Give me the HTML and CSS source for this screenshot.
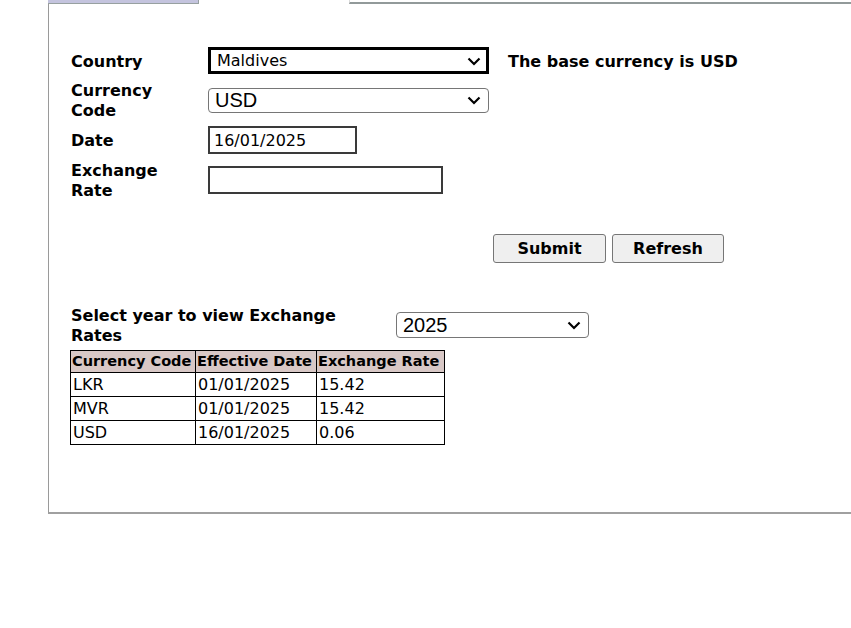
FILE: index.html
```html
<!DOCTYPE html>
<html>
<head>
<meta charset="utf-8">
<title>Exchange Rates</title>
<link rel="stylesheet" href="styles.css">
</head>
<body>
<div class="tabs">
  <div class="tab tab-left"></div>
  <div class="tab tab-active"></div>
  <div class="tab tab-right"></div>
</div>
<div class="panel">
  <div class="form">
    <label class="lbl">Country</label>
    <select class="sel sel-country"><option>Maldives</option></select>
    <span class="note">The base currency is USD</span>

    <label class="lbl">Currency Code</label>
    <select class="sel sel-currency"><option>USD</option></select>
    <span></span>

    <label class="lbl">Date</label>
    <input class="inp inp-date" type="text" value="16/01/2025">
    <span></span>

    <label class="lbl">Exchange Rate</label>
    <input class="inp inp-rate" type="text" value="">
    <span></span>
  </div>

  <div class="actions">
    <button class="btn">Submit</button>
    <button class="btn">Refresh</button>
  </div>

  <div class="year-row">
    <label class="lbl year-lbl">Select year to view Exchange Rates</label>
    <select class="sel sel-year"><option>2025</option></select>
  </div>

  <table class="rates">
    <colgroup>
      <col class="c1"><col class="c2"><col class="c3">
    </colgroup>
    <thead>
      <tr><th>Currency Code</th><th>Effective Date</th><th>Exchange Rate</th></tr>
    </thead>
    <tbody>
      <tr><td>LKR</td><td>01/01/2025</td><td>15.42</td></tr>
      <tr><td>MVR</td><td>01/01/2025</td><td>15.42</td></tr>
      <tr><td>USD</td><td>16/01/2025</td><td>0.06</td></tr>
    </tbody>
  </table>
</div>
</body>
</html>
```
FILE: styles.css
```css
html, body {
  margin: 0;
  padding: 0;
  background: #fff;
  overflow: hidden;
}
body {
  font-family: "DejaVu Sans", Verdana, sans-serif;
  font-size: 16px;
  color: #000;
}
.tabs {
  display: flex;
  height: 4px;
  margin-left: 48px;
}
.tab-left {
  width: 151px;
  background: #c4c4de;
  border-bottom: 1px solid #97a0a0;
  border-right: 1px solid #97a0a0;
  box-sizing: border-box;
}
.tab-active {
  width: 150px;
}
.tab-right {
  flex: 1;
  border-left: 1px solid #dcdcdc;
  border-bottom: 2px solid #929a9a;
  box-sizing: border-box;
}
.panel {
  margin-left: 48px;
  width: calc(100% - 46px);
  height: 510px;
  box-sizing: border-box;
  border-left: 1px solid #9a9a9a;
  border-bottom: 2px solid #a0a0a0;
  border-right: 1px solid #9a9a9a;
  padding: 43px 0 0 22px;
}
.form {
  display: grid;
  grid-template-columns: 137px auto 1fr;
  row-gap: 6px;
  align-items: center;
  justify-items: start;
}
.lbl {
  font-weight: bold;
  font-size: 16px;
  line-height: 20px;
  max-width: 120px;
  position: relative;
  top: 1px;
}
.note {
  font-weight: bold;
  line-height: 20px;
  padding-left: 19px;
  position: relative;
  top: 1px;
}
.sel {
  appearance: none;
  -webkit-appearance: none;
  box-sizing: border-box;
  margin: 0;
  font-family: "Liberation Sans", Arial, sans-serif;
  font-size: 20px;
  color: #000;
  background-color: #fff;
  background-image: url("data:image/svg+xml;utf8,<svg xmlns='http://www.w3.org/2000/svg' width='14' height='10' viewBox='0 0 14 10'><path d='M1.5 2.5 L7 8 L12.5 2.5' fill='none' stroke='black' stroke-width='2.2'/></svg>");
  background-repeat: no-repeat;
  background-position: right 7px center;
  background-size: 14px 10px;
  border: 1px solid #767676;
  border-radius: 4px;
  padding: 0 4px 0 6px;
}
.sel-country {
  width: 281px;
  height: 27px;
  border: 3px solid #000;
  border-radius: 0;
  font-family: "DejaVu Sans", Verdana, sans-serif;
  font-size: 16px;
  padding-left: 6px;
  background-position: right 5px center;
}
.sel-currency {
  width: 281px;
  height: 25px;
}
.inp {
  box-sizing: border-box;
  margin: 0;
  height: 28px;
  border: 2px solid #3a3a3a;
  font-family: "DejaVu Sans", Verdana, sans-serif;
  font-size: 16px;
  padding: 0 4px;
  color: #000;
  background: #fff;
}
.inp-date { width: 149px; }
.inp-rate { width: 235px; }
.actions {
  display: flex;
  gap: 6px;
  margin-top: 34px;
  margin-left: 422px;
}
.btn {
  box-sizing: border-box;
  width: 113px;
  height: 29px;
  margin: 0;
  padding: 0;
  font-family: "DejaVu Sans", Verdana, sans-serif;
  font-weight: bold;
  font-size: 16px;
  color: #000;
  background: #efefef;
  border: 1px solid #767676;
  border-radius: 3px;
}
.btn + .btn { width: 112px; }
.year-row {
  display: flex;
  align-items: center;
  margin-top: 42px;
}
.year-lbl {
  width: 285px;
  max-width: 285px;
  margin-right: 40px;
  flex: none;
}
.sel-year {
  width: 193px;
  height: 26px;
}
.rates {
  border-collapse: collapse;
  table-layout: fixed;
  width: 374px;
  margin-top: 5px;
  margin-left: -1px;
}
.c1 { width: 125px; }
.c2 { width: 121px; }
.c3 { width: 128px; }
.rates th, .rates td {
  border: 1px solid #000;
  padding: 1px 2px;
  text-align: left;
  white-space: nowrap;
  overflow: hidden;
}
.rates th {
  background: #d8c8c6;
  font-size: 14.5px;
  line-height: 19px;
  font-weight: bold;
  padding-left: 1px;
  padding-right: 0;
}
.rates td {
  font-size: 16px;
  line-height: 21px;
}
```
